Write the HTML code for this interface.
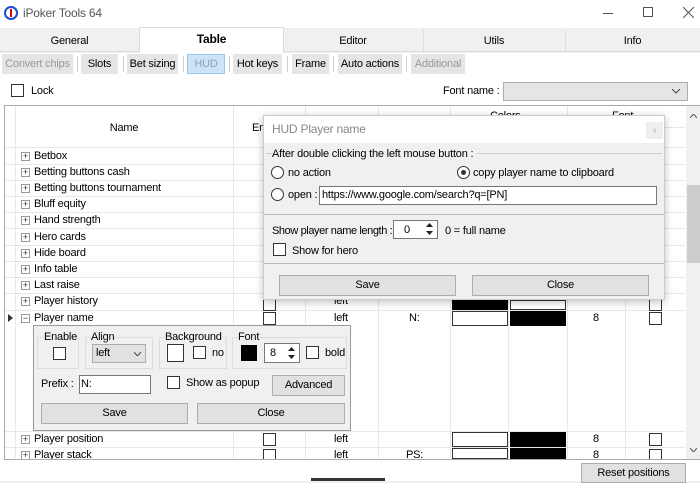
<!DOCTYPE html>
<html><head><meta charset="utf-8"><style>
*{box-sizing:border-box;margin:0;padding:0}
body{width:700px;height:481px;overflow:hidden;background:#f0f0f0;font-family:"Liberation Sans",sans-serif;font-size:11px;letter-spacing:-0.2px;color:#000;position:relative}
.a{position:absolute}
.t{position:absolute;white-space:nowrap;line-height:14px}
.cb{position:absolute;width:13px;height:13px;border:1px solid #333;background:#fff}
.btn{position:absolute;background:#e1e1e1;border:1px solid #adadad;text-align:center;line-height:18px}
.sb{position:absolute;height:20px;line-height:20px;text-align:center;background:#e5e5e5}
.pl{position:absolute;width:9px;height:9px;border:1px solid #999;background:#fff;font-size:9px;line-height:7px;text-align:center;color:#333;letter-spacing:0}
.rad{position:absolute;width:13px;height:13px;border:1px solid #333;border-radius:50%;background:#fff}
.hl{position:absolute;height:1px;background:#e8e8e8}
.vl{position:absolute;width:1px;background:#e8e8e8}
</style></head><body>
<div class="a" style="left:0;top:0;width:700px;height:28px;background:#fff"></div>
<div class="a" style="left:4px;top:6px;width:14px;height:14px;border:2px solid #1a4fd6;border-radius:50%"></div>
<div class="a" style="left:10px;top:9px;width:2px;height:8px;background:#d00"></div>
<div class="t" style="left:23px;top:6px;font-size:12px;color:#555">iPoker Tools 64</div>
<div class="a" style="left:603px;top:13px;width:10px;height:1px;background:#555"></div>
<div class="a" style="left:643px;top:7px;width:10px;height:10px;border:1px solid #555"></div>
<svg class="a" style="left:683px;top:7px" width="11" height="11"><path d="M0 0L11 11M11 0L0 11" stroke="#555" stroke-width="1"/></svg>
<div class="a" style="left:0;top:29px;width:700px;height:23px;background:#f0f0f0;border-bottom:1px solid #dcdcdc"></div>
<div class="a" style="left:139px;top:27px;width:145px;height:26px;background:#fff;border:1px solid #dcdcdc;border-bottom:none"></div>
<div class="t" style="left:0;width:139px;text-align:center;top:34px">General</div>
<div class="t" style="left:139px;width:145px;text-align:center;top:32px;font-weight:bold;font-size:12px">Table</div>
<div class="t" style="left:283px;width:140px;text-align:center;top:34px">Editor</div>
<div class="vl" style="left:423px;top:30px;height:22px;background:#dcdcdc"></div>
<div class="t" style="left:423px;width:142px;text-align:center;top:34px">Utils</div>
<div class="vl" style="left:565px;top:30px;height:22px;background:#dcdcdc"></div>
<div class="t" style="left:565px;width:135px;text-align:center;top:34px">Info</div>
<div class="a" style="left:0;top:53px;width:700px;height:428px;background:#fff"></div>
<div class="sb" style="left:2px;top:54px;width:71px;color:#999">Convert chips</div>
<div class="sb" style="left:81px;top:54px;width:37px">Slots</div>
<div class="sb" style="left:127px;top:54px;width:51px">Bet sizing</div>
<div class="sb" style="left:187px;top:54px;width:38px;background:#cce4f7;border:1px solid #99c9ef;color:#8aa;line-height:18px">HUD</div>
<div class="sb" style="left:233px;top:54px;width:49px">Hot keys</div>
<div class="sb" style="left:292px;top:54px;width:37px">Frame</div>
<div class="sb" style="left:338px;top:54px;width:64px">Auto actions</div>
<div class="sb" style="left:411px;top:54px;width:54px;color:#999">Additional</div>
<div class="vl" style="left:77px;top:56px;height:16px;background:#ccc"></div>
<div class="vl" style="left:123px;top:56px;height:16px;background:#ccc"></div>
<div class="vl" style="left:183px;top:56px;height:16px;background:#ccc"></div>
<div class="vl" style="left:229px;top:56px;height:16px;background:#ccc"></div>
<div class="vl" style="left:287px;top:56px;height:16px;background:#ccc"></div>
<div class="vl" style="left:333px;top:56px;height:16px;background:#ccc"></div>
<div class="vl" style="left:406px;top:56px;height:16px;background:#ccc"></div>
<div class="a" style="left:4px;top:75px;width:682px;height:30px;background:#fff"></div>
<div class="cb" style="left:11px;top:84px"></div>
<div class="t" style="left:31px;top:84px">Lock</div>
<div class="t" style="left:443px;top:84px">Font name :</div>
<div class="a" style="left:503px;top:82px;width:185px;height:19px;background:#e5e5e5;border:1px solid #adadad"></div>
<svg class="a" style="left:672px;top:89px" width="8" height="5"><path d="M0 0L4 4L8 0" stroke="#444" fill="none"/></svg>
<div class="a" style="left:4px;top:105px;width:696px;height:355px;border:1px solid #aaa;background:#fff"></div>
<div class="hl" style="left:5px;top:147px;width:680px"></div>
<div class="hl" style="left:450px;top:127px;width:235px"></div>
<div class="vl" style="left:15px;top:106px;height:352px"></div>
<div class="vl" style="left:233px;top:106px;height:352px"></div>
<div class="vl" style="left:305px;top:106px;height:352px"></div>
<div class="vl" style="left:378px;top:106px;height:352px"></div>
<div class="vl" style="left:450px;top:106px;height:352px"></div>
<div class="vl" style="left:508px;top:127px;height:331px"></div>
<div class="vl" style="left:567px;top:106px;height:352px"></div>
<div class="vl" style="left:625px;top:127px;height:331px"></div>
<div class="t" style="left:15px;width:218px;text-align:center;top:121px">Name</div>
<div class="t" style="left:252px;top:121px">En</div>
<div class="t" style="left:490px;top:109px">Colors</div>
<div class="t" style="left:612px;top:109px">Font</div>
<div class="a" style="left:686px;top:106px;width:14px;height:353px;background:#f0f0f0"></div>
<div class="a" style="left:687px;top:185px;width:13px;height:78px;background:#cdcdcd"></div>
<svg class="a" style="left:690px;top:114px" width="7" height="4"><path d="M0 4L3.5 0L7 4" stroke="#555" fill="none"/></svg>
<svg class="a" style="left:690px;top:448px" width="7" height="4"><path d="M0 0L3.5 4L7 0" stroke="#555" fill="none"/></svg>
<div class="hl" style="left:5px;top:164px;width:680px"></div>
<div class="hl" style="left:5px;top:180px;width:680px"></div>
<div class="hl" style="left:5px;top:196px;width:680px"></div>
<div class="hl" style="left:5px;top:212px;width:680px"></div>
<div class="hl" style="left:5px;top:228px;width:680px"></div>
<div class="hl" style="left:5px;top:245px;width:680px"></div>
<div class="hl" style="left:5px;top:261px;width:680px"></div>
<div class="hl" style="left:5px;top:277px;width:680px"></div>
<div class="hl" style="left:5px;top:293px;width:680px"></div>
<div class="hl" style="left:5px;top:310px;width:680px"></div>
<div class="hl" style="left:5px;top:431px;width:680px"></div>
<div class="hl" style="left:5px;top:447px;width:680px"></div>
<div class="pl" style="left:21px;top:152px">+</div><div class="t" style="left:34px;top:149px">Betbox</div>
<div class="pl" style="left:21px;top:168px">+</div><div class="t" style="left:34px;top:165px">Betting buttons cash</div>
<div class="pl" style="left:21px;top:184px">+</div><div class="t" style="left:34px;top:181px">Betting buttons tournament</div>
<div class="pl" style="left:21px;top:200px">+</div><div class="t" style="left:34px;top:197px">Bluff equity</div>
<div class="pl" style="left:21px;top:216px">+</div><div class="t" style="left:34px;top:213px">Hand strength</div>
<div class="pl" style="left:21px;top:233px">+</div><div class="t" style="left:34px;top:230px">Hero cards</div>
<div class="pl" style="left:21px;top:249px">+</div><div class="t" style="left:34px;top:246px">Hide board</div>
<div class="pl" style="left:21px;top:265px">+</div><div class="t" style="left:34px;top:262px">Info table</div>
<div class="pl" style="left:21px;top:281px">+</div><div class="t" style="left:34px;top:278px">Last raise</div>
<div class="pl" style="left:21px;top:297px">+</div><div class="t" style="left:34px;top:294px">Player history</div>
<div class="cb" style="left:263px;top:298px"></div><div class="t" style="left:334px;top:294px">left</div>
<div class="a" style="left:452px;top:300px;width:56px;height:10px;background:#000"></div>
<div class="a" style="left:510px;top:300px;width:56px;height:10px;border:1px solid #333"></div>
<div class="cb" style="left:649px;top:298px"></div>
<svg class="a" style="left:8px;top:314px" width="5" height="8"><path d="M0 0L5 4L0 8Z" fill="#333"/></svg>
<div class="pl" style="left:21px;top:314px">−</div><div class="t" style="left:34px;top:311px">Player name</div>
<div class="cb" style="left:263px;top:312px"></div><div class="t" style="left:334px;top:311px">left</div>
<div class="t" style="left:409px;top:311px">N:</div>
<div class="a" style="left:452px;top:311px;width:56px;height:15px;border:1px solid #333;background:#fff"></div>
<div class="a" style="left:510px;top:311px;width:56px;height:15px;background:#000"></div>
<div class="t" style="left:593px;top:311px">8</div>
<div class="cb" style="left:649px;top:312px"></div>
<div class="a" style="left:33px;top:325px;width:318px;height:106px;background:#f0f0f0;border:1px solid #999"></div>
<div class="a" style="left:37px;top:337px;width:42px;height:32px;border:1px solid #ddd"></div>
<div class="t" style="left:43px;top:330px;background:#f0f0f0;padding:0 1px">Enable</div>
<div class="cb" style="left:53px;top:347px"></div>
<div class="a" style="left:85px;top:337px;width:68px;height:32px;border:1px solid #ddd"></div>
<div class="t" style="left:91px;top:330px;background:#f0f0f0">Align</div>
<div class="a" style="left:92px;top:344px;width:54px;height:19px;background:#e1e1e1;border:1px solid #adadad"></div>
<div class="t" style="left:96px;top:346px">left</div>
<svg class="a" style="left:134px;top:352px" width="7" height="4"><path d="M0 0L3.5 4L7 0" stroke="#444" fill="none"/></svg>
<div class="a" style="left:159px;top:337px;width:68px;height:32px;border:1px solid #ddd"></div>
<div class="t" style="left:165px;top:330px;background:#f0f0f0">Background</div>
<div class="a" style="left:167px;top:344px;width:17px;height:18px;border:1px solid #333;background:#fff"></div>
<div class="cb" style="left:193px;top:346px"></div>
<div class="t" style="left:212px;top:346px">no</div>
<div class="a" style="left:232px;top:337px;width:115px;height:32px;border:1px solid #ddd"></div>
<div class="t" style="left:238px;top:330px;background:#f0f0f0">Font</div>
<div class="a" style="left:241px;top:345px;width:16px;height:16px;background:#000"></div>
<div class="a" style="left:264px;top:343px;width:36px;height:20px;border:1px solid #777;background:#fff"></div>
<div class="t" style="left:270px;top:346px">8</div>
<svg class="a" style="left:288px;top:347px" width="7" height="12"><path d="M0 4L3.5 0L7 4ZM0 8L3.5 12L7 8Z" fill="#222"/></svg>
<div class="cb" style="left:306px;top:346px"></div>
<div class="t" style="left:325px;top:346px">bold</div>
<div class="t" style="left:41px;top:377px">Prefix :</div>
<div class="a" style="left:79px;top:375px;width:72px;height:19px;border:1px solid #777;background:#fff"></div>
<div class="t" style="left:81px;top:377px">N:</div>
<div class="cb" style="left:167px;top:376px"></div>
<div class="t" style="left:186px;top:376px">Show as popup</div>
<div class="btn" style="left:272px;top:375px;width:73px;height:21px;line-height:19px">Advanced</div>
<div class="btn" style="left:41px;top:403px;width:147px;height:21px;line-height:19px">Save</div>
<div class="btn" style="left:197px;top:403px;width:148px;height:21px;line-height:19px">Close</div>
<div class="pl" style="left:21px;top:435px">+</div><div class="t" style="left:34px;top:432px">Player position</div>
<div class="cb" style="left:263px;top:433px"></div><div class="t" style="left:334px;top:432px">left</div>
<div class="a" style="left:452px;top:432px;width:56px;height:15px;border:1px solid #333;background:#fff"></div>
<div class="a" style="left:510px;top:432px;width:56px;height:15px;background:#000"></div>
<div class="t" style="left:593px;top:432px">8</div>
<div class="cb" style="left:649px;top:433px"></div>
<div class="pl" style="left:21px;top:451px">+</div><div class="t" style="left:34px;top:448px">Player stack</div>
<div class="cb" style="left:263px;top:449px"></div><div class="t" style="left:334px;top:448px">left</div>
<div class="t" style="left:406px;top:448px">PS:</div>
<div class="a" style="left:452px;top:448px;width:56px;height:11px;border:1px solid #333;background:#fff"></div>
<div class="a" style="left:510px;top:448px;width:56px;height:11px;background:#000"></div>
<div class="t" style="left:593px;top:448px">8</div>
<div class="cb" style="left:649px;top:449px"></div>
<div class="a" style="left:4px;top:459px;width:696px;height:22px;background:#fff;border-top:1px solid #aaa"></div>
<div class="btn" style="left:581px;top:463px;width:105px;height:20px;line-height:18px">Reset positions</div>
<div class="a" style="left:311px;top:478px;width:74px;height:3px;background:#333"></div>
<div class="a" style="left:263px;top:115px;width:402px;height:185px;background:#f0f0f0;border:1px solid #ccc;box-shadow:0 2px 8px rgba(0,0,0,.25)"></div>
<div class="a" style="left:264px;top:116px;width:400px;height:27px;background:#fff"></div>
<div class="t" style="left:272px;top:122px;color:#888;font-size:12px">HUD Player name</div>
<div class="a" style="left:646px;top:122px;width:17px;height:17px;background:#eee;color:#bbb;font-size:8px;text-align:center;line-height:17px">x</div>
<div class="a" style="left:266px;top:153px;width:396px;height:60px;border-top:1px solid #ccc"></div>
<div class="t" style="left:272px;top:147px;background:#f0f0f0;padding-right:4px">After double clicking the left mouse button :</div>
<div class="rad" style="left:271px;top:166px"></div>
<div class="t" style="left:288px;top:166px">no action</div>
<div class="rad" style="left:457px;top:166px"></div>
<div class="a" style="left:461px;top:170px;width:5px;height:5px;border-radius:50%;background:#333"></div>
<div class="t" style="left:473px;top:166px">copy player name to clipboard</div>
<div class="rad" style="left:271px;top:188px"></div>
<div class="t" style="left:288px;top:188px">open :</div>
<div class="a" style="left:319px;top:186px;width:338px;height:19px;border:1px solid #777;background:#fff"></div>
<div class="t" style="left:322px;top:188px">https://www.google.com/search?q=[PN]</div>
<div class="hl" style="left:264px;top:214px;width:400px;background:#bbb"></div>
<div class="t" style="left:272px;top:224px;letter-spacing:-0.4px">Show player name length :</div>
<div class="a" style="left:393px;top:220px;width:45px;height:19px;border:1px solid #777;background:#fff"></div>
<div class="t" style="left:404px;top:223px">0</div>
<svg class="a" style="left:426px;top:223px" width="7" height="12"><path d="M0 4L3.5 0L7 4ZM0 8L3.5 12L7 8Z" fill="#222"/></svg>
<div class="t" style="left:445px;top:224px">0 = full name</div>
<div class="cb" style="left:273px;top:243px"></div>
<div class="t" style="left:292px;top:244px">Show for hero</div>
<div class="hl" style="left:264px;top:263px;width:400px;background:#bbb"></div>
<div class="btn" style="left:279px;top:275px;width:177px;height:21px;line-height:19px">Save</div>
<div class="btn" style="left:472px;top:275px;width:177px;height:21px;line-height:19px">Close</div>
</body></html>
